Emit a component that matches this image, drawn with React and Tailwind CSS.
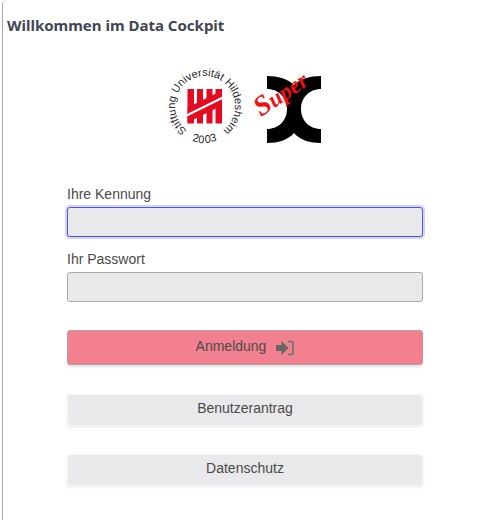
import React from 'react';

function UniversityLogo() {
  return (
    <svg
      viewBox="0 0 78 78"
      className="size-[78px] overflow-visible"
      role="img"
      aria-label="Stiftung Universität Hildesheim 2003"
      fontFamily="'Liberation Sans', Arial, sans-serif"
      fill="#2a2a2a"
    >
      <defs>
        <path id="ring" d="M34 68.600 A30 30 0 1 1 44 68.600" />
      </defs>
      <text fontSize="11">
        <textPath href="#ring" startOffset="50%" textAnchor="middle">
          Stiftung Universität Hildesheim
        </textPath>
      </text>
      <text x="26 32 39 45" y="74 76 76 75" rotate="12 4 -4 -12" fontSize="11">
        2003
      </text>
      <g fill="#e60a20">
        <path d="M21.500 22h6.500v34.500h-6.500z M31 22h6v34.500h-6z M40.500 22h6v34.500h-6z M49.500 22h6.500v34.500h-6.500z" />
        <path d="M21.500 40.500 56 23.500v15L21.500 55.500z" />
      </g>
      <path d="M20 48.700 57.500 30.300" stroke="#fff" strokeWidth="2.200" />
    </svg>
  );
}

function SuperXLogo() {
  return (
    <svg viewBox="0 0 72 78" className="h-[78px] w-[72px] overflow-visible" role="img" aria-label="SuperX">
      <path
        d="M15 9c11 0 21 3 27 9C48 12 58 9 69 9v13c-12 0-20 9-20 20s8 20 20 20v14c-11 0-21-3-27-10C36 73 26 76 15 76V62c12 0 20-9 20-20s-8-20-20-20z"
        fill="#000"
      />
      <text
        transform="translate(9 50) rotate(-34)"
        fontFamily="'Liberation Serif', serif"
        fontStyle="italic"
        fontWeight="700"
        fontSize="23"
        fill="#f01010"
      >
        <tspan fontSize="28">S</tspan>
        <tspan>uper</tspan>
      </text>
    </svg>
  );
}

function LoginIcon() {
  return (
    <svg viewBox="0 0 18 16" className="h-4 w-[18px]" aria-hidden="true">
      <path d="M0 5h5.500V1L12.500 8l-7 7v-4H0z" fill="#666" />
      <path d="M12 1.500h3a2 2 0 0 1 2 2v9a2 2 0 0 1-2 2h-3" fill="none" stroke="#777" strokeWidth="1.800" />
    </svg>
  );
}

function Field({ id, label, ...props }) {
  return (
    <div className="flex flex-col gap-[3px]">
      <label htmlFor={id} className="text-sm leading-5">
        {label}
      </label>
      <input
        id={id}
        className="h-[30px] w-full rounded-[3px] border border-[#aaaab0] bg-[#e9e9eb] px-2 text-sm outline-none focus:border-[#5656d0] focus:ring-2 focus:ring-[#cfd4fa]"
        {...props}
      />
    </div>
  );
}

function SecondaryButton({ children }) {
  return (
    <button
      type="button"
      className="h-8 w-full rounded-[3px] border border-[#f8f8f8] bg-[#e9e9eb] pb-1 text-sm shadow-[0_1px_3px_#e4e4e4]"
    >
      {children}
    </button>
  );
}

export default function App() {
  return (
    <div className="min-h-screen bg-white pt-px pl-[2px] font-['Liberation_Sans',Arial,sans-serif] text-[#4a4a4a]">
      <main className="min-h-screen rounded-tl-[4px] border-l border-[#aaaaaa]">
        <h1 className="pt-3 pl-1 font-['Noto_Sans',sans-serif] text-[15px] leading-6 font-bold text-[#414655]">
          Willkommen im Data Cockpit
        </h1>
        <form className="pr-[68px] pl-16">
          <div className="flex justify-center gap-2 pt-[30px]">
            <UniversityLogo />
            <SuperXLogo />
          </div>
          <div className="mt-[39px] flex flex-col gap-3">
            <Field id="username" label="Ihre Kennung" type="text" autoFocus />
            <Field id="password" label="Ihr Passwort" type="password" />
          </div>
          <button
            type="submit"
            className="mt-7 flex h-[35px] w-full items-center justify-center gap-[10px] rounded-[3px] border border-[#b4a0a5] bg-[#f2808f] text-sm shadow-[0_2px_3px_#e4e4e4]"
          >
            <span className="pb-1">Anmeldung</span>
            <LoginIcon />
          </button>
          <div className="mt-[29px] flex flex-col gap-7">
            <SecondaryButton>Benutzerantrag</SecondaryButton>
            <SecondaryButton>Datenschutz</SecondaryButton>
          </div>
        </form>
      </main>
    </div>
  );
}
